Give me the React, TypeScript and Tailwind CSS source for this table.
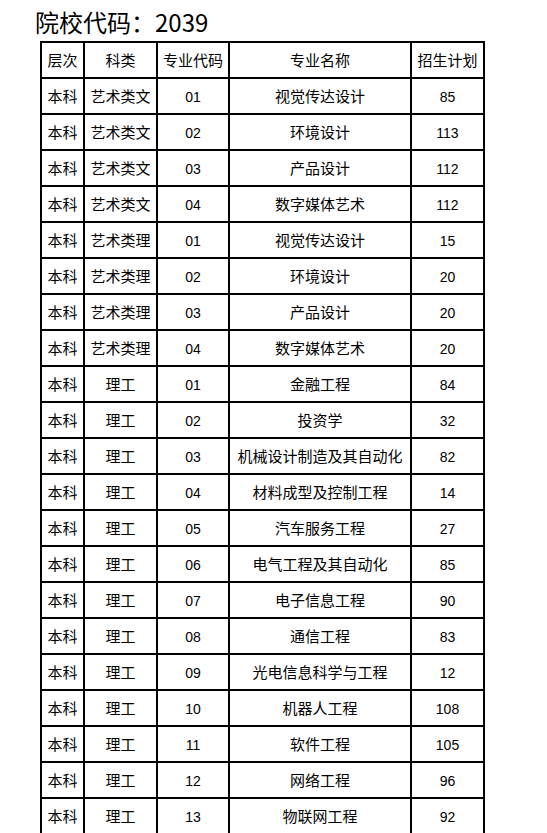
import React from "react"

const rows: [string, string, string, string, string][] = [
  ["本科", "艺术类文", "01", "视觉传达设计", "85"],
  ["本科", "艺术类文", "02", "环境设计", "113"],
  ["本科", "艺术类文", "03", "产品设计", "112"],
  ["本科", "艺术类文", "04", "数字媒体艺术", "112"],
  ["本科", "艺术类理", "01", "视觉传达设计", "15"],
  ["本科", "艺术类理", "02", "环境设计", "20"],
  ["本科", "艺术类理", "03", "产品设计", "20"],
  ["本科", "艺术类理", "04", "数字媒体艺术", "20"],
  ["本科", "理工", "01", "金融工程", "84"],
  ["本科", "理工", "02", "投资学", "32"],
  ["本科", "理工", "03", "机械设计制造及其自动化", "82"],
  ["本科", "理工", "04", "材料成型及控制工程", "14"],
  ["本科", "理工", "05", "汽车服务工程", "27"],
  ["本科", "理工", "06", "电气工程及其自动化", "85"],
  ["本科", "理工", "07", "电子信息工程", "90"],
  ["本科", "理工", "08", "通信工程", "83"],
  ["本科", "理工", "09", "光电信息科学与工程", "12"],
  ["本科", "理工", "10", "机器人工程", "108"],
  ["本科", "理工", "11", "软件工程", "105"],
  ["本科", "理工", "12", "网络工程", "96"],
  ["本科", "理工", "13", "物联网工程", "92"],
]

const headers = ["层次", "科类", "专业代码", "专业名称", "招生计划"]
const cell = "border-2 border-black h-[36px] p-0 text-center align-middle whitespace-nowrap"

export default function App() {
  return (
    <div className="min-h-[833px] bg-white text-black font-['Noto_Sans_CJK_SC','Noto_Sans',sans-serif]">
      <h1 className="pl-[35px] pt-[6px] h-[41px] text-[24px] leading-[32px] font-normal">院校代码：2039</h1>
      <table className="ml-[40px] w-[443px] table-fixed border-collapse text-[15px]">
        <colgroup>
          <col className="w-[43px]" />
          <col className="w-[73px]" />
          <col className="w-[72px]" />
          <col className="w-[182px]" />
          <col className="w-[73px]" />
        </colgroup>
        <thead>
          <tr>
            {headers.map((h) => (
              <th key={h} className={cell + " font-normal"}>{h}</th>
            ))}
          </tr>
        </thead>
        <tbody>
          {rows.map((r, i) => (
            <tr key={i}>
              {r.map((c, j) => (
                <td key={j} className={cell + (j === 2 || j === 4 ? " text-[14px] pt-[2px] font-['Liberation_Sans',sans-serif]" : "")}>{c}</td>
              ))}
            </tr>
          ))}
        </tbody>
      </table>
    </div>
  )
}
